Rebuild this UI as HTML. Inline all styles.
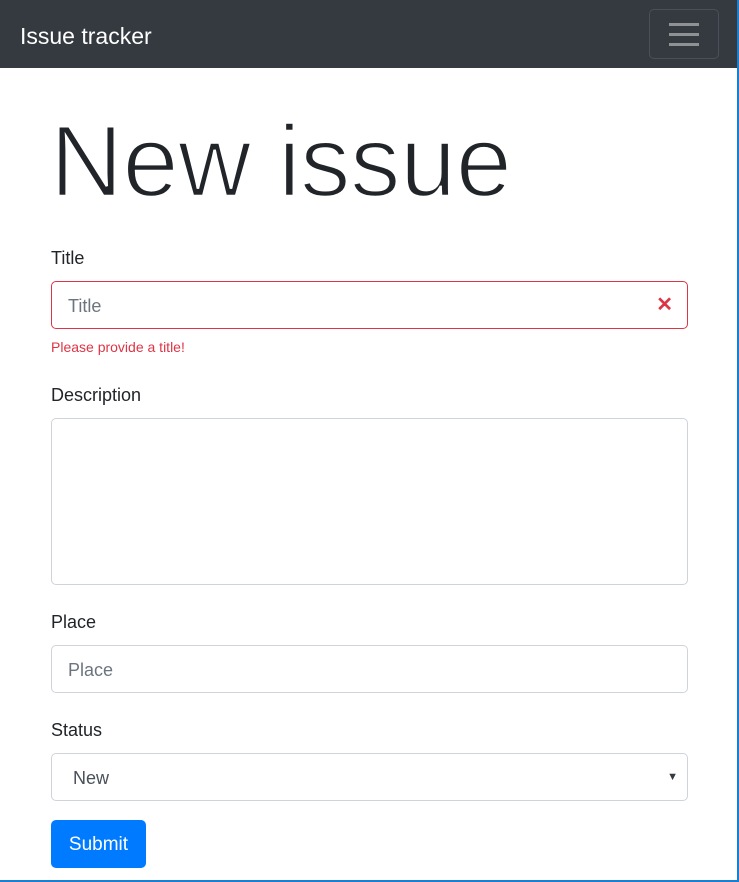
<!DOCTYPE html>
<html><head><style>
*{box-sizing:border-box}
body{margin:0;width:739px;height:882px;background:#fff;font-family:"Liberation Sans",sans-serif;color:#212529;position:relative;overflow:hidden}
.frame{position:absolute;left:0;top:0;width:739px;height:882px;border-right:2px solid #1a7fd0;border-bottom:2px solid #1a7fd0;pointer-events:none}
.nav{position:absolute;left:0;top:0;width:737px;height:68px;background:#343a40}
.brand{position:absolute;left:20px;top:23px;color:#fff;font-size:23px}
.tog{position:absolute;left:649px;top:9px;width:70px;height:50px;border:1px solid #4a5057;border-radius:5px}
.tog i{position:absolute;left:19px;width:30px;height:3px;background:#8f9295}
h1{position:absolute;left:50px;top:102px;margin:0;font-size:101px;font-weight:300;line-height:1.2;letter-spacing:-0.5px;-webkit-text-stroke:2.5px #fff;paint-order:normal}
.lbl{position:absolute;left:51px;font-size:18px}
.in{position:absolute;left:51px;width:637px;height:48px;border:1px solid #ced4da;border-radius:5px;font-size:18px;color:#6c757d;padding:14px 16px 10px}
.err{border-color:#dc3545}
.x{position:absolute;right:14px;top:10px;color:#dc3545;font-size:20px;font-weight:bold}
.msg{position:absolute;left:51px;top:339px;font-size:14px;color:#dc3545}
.btn{position:absolute;left:51px;top:820px;width:95px;height:48px;background:#007bff;color:#fff;border-radius:5px;font-size:19px;text-align:center;line-height:50px}
</style></head><body>
<div class="nav"><div class="brand">Issue tracker</div><div class="tog"><i style="top:13px"></i><i style="top:23px"></i><i style="top:33px"></i></div></div>
<h1>New issue</h1>
<div class="lbl" style="top:248px">Title</div>
<div class="in err" style="top:281px">Title<span class="x">✕</span></div>
<div class="msg">Please provide a title!</div>
<div class="lbl" style="top:385px">Description</div>
<div class="in" style="top:418px;height:167px"></div>
<div class="lbl" style="top:612px">Place</div>
<div class="in" style="top:645px">Place</div>
<div class="lbl" style="top:720px">Status</div>
<div class="in" style="top:753px;color:#495057;padding-left:21px">New<span style="position:absolute;right:9px;top:17px;font-size:11px;color:#343a40">▼</span></div>
<div class="btn">Submit</div>
<div class="frame"></div>
</body></html>
